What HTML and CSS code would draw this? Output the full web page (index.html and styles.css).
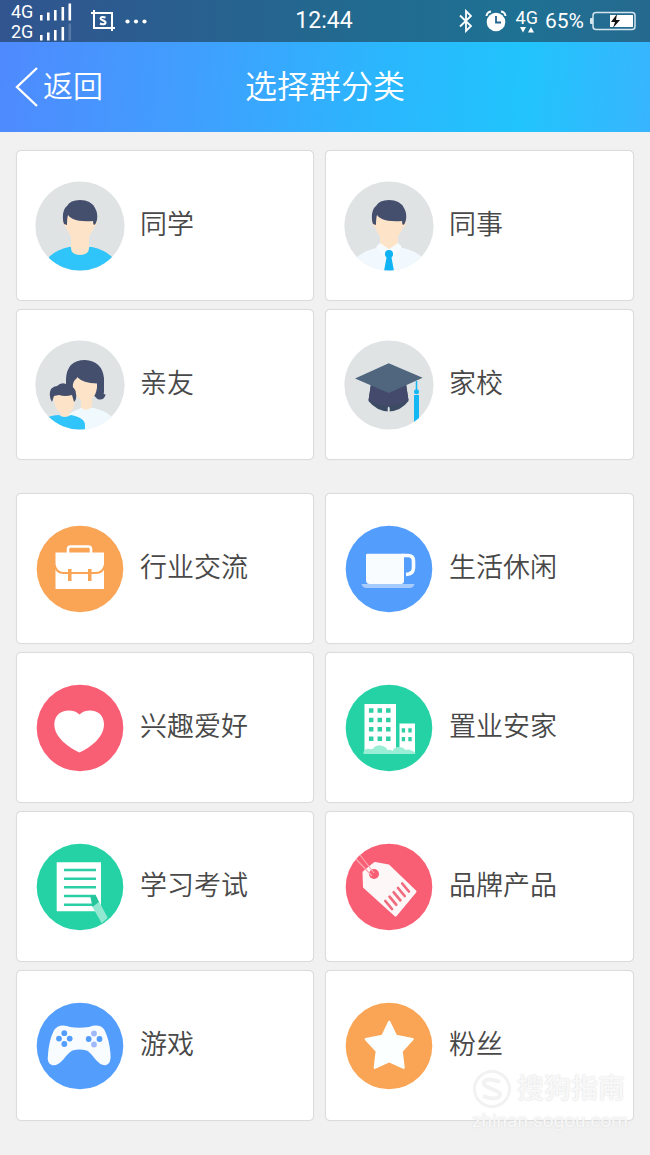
FILE: index.html
```html
<!DOCTYPE html>
<html lang="zh-CN">
<head>
<meta charset="utf-8">
<meta name="viewport" content="width=device-width, initial-scale=1">
<title>选择群分类</title>
<link rel="stylesheet" href="styles.css">
</head>
<body>
<svg class="defs" width="0" height="0" aria-hidden="true">
  <defs>
    <clipPath id="disc"><circle cx="45" cy="45" r="44.6"/></clipPath>
    <g id="head">
      <path d="M36 54h18v13q0 7-9 7t-9-7z" fill="#fde3c8"/>
      <path d="M30 38q-3 0-2 4 .6 3.500 3 4 3 9 9 13 5 3 10 0 6-4 9-13 2.500-.5 3-4 0-4-2-4l-2-6H32z" fill="#fde3c8"/>
      <path d="M29 43q-1.500-3-1-10 1-6 4-8 3-6 13-6 11 0 15 8 3 5 2 12l-1.500 4-1.500 1q-1-1-1-4-13 1-20-2-4-2-5-4-1 3-1 10z" fill="#444f6e"/>
    </g>
  </defs>
</svg>

<div class="status">
  <div class="status-side">
    <div class="networks">
      <div class="network"><span>4G</span>
        <svg width="33" height="18" viewBox="0 0 33 18" fill="#fff"><path d="M1 12h2.600v5.500H1zM8 9.500h2.600v8H8zM15 7h2.600v10.500H15zM22.500 4h2.600v13.500h-2.600zM29.500.5h2.600v17h-2.600z"/></svg>
      </div>
      <div class="network"><span>2G</span>
        <svg width="33" height="18" viewBox="0 0 33 18" fill="#fff"><path d="M1 12h2.600v5.500H1zM8 9.500h2.600v8H8zM15 7h2.600v10.500H15zM22.500 4h2.600v13.500h-2.600z"/><path d="M29.500.5h2.600v17h-2.600z" opacity=".2"/></svg>
      </div>
    </div>
    <svg class="crop" width="24" height="22" viewBox="0 0 24 22" fill="none" stroke="#fff" stroke-width="2"><path d="M0 3h21v18M3 0v18h21M14.500 7.500Q10 6 9.500 8.500c0 2 5 1.500 5 4 0 2.300-3.500 2-5.500 1"/></svg>
    <svg width="22" height="5" viewBox="0 0 22 5" fill="#fff"><circle cx="2.500" cy="2.500" r="2.100"/><circle cx="11" cy="2.500" r="2.100"/><circle cx="19.500" cy="2.500" r="2.100"/></svg>
  </div>
  <time class="clock">12:44</time>
  <div class="status-side status-end">
    <svg width="14" height="24" viewBox="0 0 14 24" fill="none" stroke="#fff" stroke-width="1.800"><path d="M1 6.500l11 10.500-5 5V2l5 5L1 17.500"/></svg>
    <svg class="alarm" width="22" height="22" viewBox="0 0 22 22"><circle cx="11" cy="12" r="9.300" fill="#fff"/><path d="M1.500 6Q2 2 6 1.500M20.500 6Q20 2 16 1.500" fill="none" stroke="#fff" stroke-width="2"/><path d="M11 6v6.500h5" fill="none" stroke="#23638f" stroke-width="1.800"/></svg>
    <div class="data"><span>4G</span>
      <svg width="16" height="6" viewBox="0 0 16 6" fill="#fff"><path d="M1 0h6L4 5.500zM9 5.500h6L12 0z"/></svg>
    </div>
    <span class="percent">65%</span>
    <svg width="48" height="20" viewBox="0 0 48 20"><path d="M4 7H2q-1 0-1 1v4q0 1 1 1h2" fill="#d5e5ee"/><rect x="4" y="1.500" width="42" height="17" rx="3" fill="none" stroke="#d5e5ee" stroke-width="1.500"/><path d="M21 4h23v12H21z" fill="#fff"/><path d="M28 3l-6 8h4l-2 6 7-8h-4z" fill="#111"/></svg>
  </div>
</div>

<header class="bar">
  <a class="back" href="#back"><svg width="24" height="40" viewBox="0 0 24 40" fill="none" stroke="#fff" stroke-width="2.400"><path d="M22 1L2 20l20 19"/></svg><span>返回</span></a>
  <h1 class="title">选择群分类</h1>
</header>

<main class="content">
  <nav class="group" aria-label="关系">
    <a class="card" href="#classmate"><svg class="icon" viewBox="0 0 90 90"><g clip-path="url(#disc)"><path d="M0 0h90v90H0z" fill="#dfe3e4"/><path d="M14 76q7-7 20-10h23q13 3 20 10v14H14z" fill="#2fc5fb"/><use href="#head"/></g></svg><span class="label">同学</span></a>
    <a class="card" href="#colleague"><svg class="icon" viewBox="0 0 90 90"><g clip-path="url(#disc)"><path d="M0 0h90v90H0z" fill="#dfe3e4"/><path d="M12 77q7-7 20-10h27q13 3 20 10v14H12z" fill="#f1f9fe"/><use href="#head"/><path d="M36 62l9 6 9-6 4 4-7 9-6-6-6 6-7-9z" fill="#f5fbfe"/><circle cx="45" cy="73" r="4" fill="#0fb2f2"/><path d="M43 74h4l3 16H40z" fill="#0fb2f2"/></g></svg><span class="label">同事</span></a>
    <a class="card" href="#family"><svg class="icon" viewBox="0 0 90 90"><g clip-path="url(#disc)"><path d="M0 0h90v90H0z" fill="#dfe3e4"/><path d="M31 50V39q1-19 19-19 17 1 19 18v14q-1 3 1 2l.5 1q-2 6-8 4l-3-3-18 0-4 4-5-4z" fill="#444f6e"/><path d="M34 74q6-4 12-6h13q12 3 18 9l-5 13H44z" fill="#f0f9fe"/><path d="M42 37q6 6 20 6.500v4q-1 8-5 11v8q-5 6-11 1v-7q-7-5-8-13-1-6 4-9.500z" fill="#fde3c8"/><path d="M17 55q0 4 2 6 2 10 7 12v3q3 3 8 0v-3q5-3 6-12v-6q-11 0-16-2z" fill="#fde3c8"/><path d="M17 62q-4-7-1-13 3-3 6-3 5-5 11-1 8 2 8 9 1 5-2 8l-2-7q-7 2-13 0l-5 1z" fill="#444f6e"/><path d="M13 77q6-2 11-2 5 4 12 0 14 3 14 10v6H26z" fill="#2fc5fb"/></g></svg><span class="label">亲友</span></a>
    <a class="card" href="#school"><svg class="icon" viewBox="0 0 90 90"><g clip-path="url(#disc)"><path d="M0 0h90v90H0z" fill="#dfe3e4"/><path d="M27 44l-2.500 17q8 10 20.200 10.500Q57 71 64.500 61L62 44z" fill="#3b4b63"/><path d="M27 44l-2.500 16q8 5 20.200 6Q57 65 64.500 60L62 44z" fill="#444a6c"/><path d="M43.700 72v-4q1-3 2 0v4z" fill="#dfe3e4"/><path d="M11 38.500l33.700-15.200 34 14.400L44.700 53z" fill="#50667e"/><path d="M72.500 41v12" stroke="#12b7f3" stroke-width="1.500"/><circle cx="72.500" cy="51.700" r="2.500" fill="#12b7f3"/><path d="M70 55h5v34h-5z" fill="#12b7f3"/></g></svg><span class="label">家校</span></a>
  </nav>

  <nav class="group" aria-label="主题">
    <a class="card" href="#industry"><svg class="icon" viewBox="0 0 90 90"><circle cx="45" cy="45" r="43.300" fill="#faa455"/><path d="M33 29v-4q0-2.500 2.500-2.500h18Q56 22.500 56 25v4" fill="none" stroke="#fff" stroke-width="2.600"/><path d="M20.500 28.500H69V65H20.500z" fill="#fff"/><path d="M19.500 41q2 8 9 8h32.500q7 0 9-8" fill="none" stroke="#faa455" stroke-width="2.200"/><path d="M33 45h3.500v12H33zM53 45h3.500v12H53z" fill="#faa455"/></svg><span class="label">行业交流</span></a>
    <a class="card" href="#leisure"><svg class="icon" viewBox="0 0 90 90"><circle cx="45" cy="45" r="43.300" fill="#539dfd"/><path d="M23.500 29.700H60V57q0 3-3 3H25.500q-3.500 0-3.500-4V31q0-1.300 1.500-1.300z" fill="#f9fcff"/><path d="M58 31.500h6q5.500 0 5.500 5.500v7q0 6-7.500 6.500" fill="none" stroke="#f9fcff" stroke-width="3.600"/><path d="M17.500 60h53q-1 4-5 4h-43q-4 0-5-4z" fill="#a6ccfe"/></svg><span class="label">生活休闲</span></a>
    <a class="card" href="#hobby"><svg class="icon" viewBox="0 0 90 90"><circle cx="45" cy="45" r="43.300" fill="#f95f74"/><path d="M44.500 31.600C39 25 20 25 19.300 41c0 14 15 23.500 25.200 28.600C55 64.500 69 55 69 41 68.500 25 50 25 44.500 31.600z" fill="#fff"/></svg><span class="label">兴趣爱好</span></a>
    <a class="card" href="#home"><svg class="icon" viewBox="0 0 90 90"><circle cx="45" cy="45" r="43.300" fill="#25d2a6"/><path d="M20.500 21H52v50H20.500zM55.500 40.600H71V71H55.500z" fill="#fff"/><path d="M27.200 25.300v34M35.800 25.300v34M44.300 25.300v34" stroke="#2fcfa6" stroke-width="4.500" stroke-dasharray="4.500 4.870"/><path d="M59.400 45.300v14M66 45.300v14" stroke="#2fcfa6" stroke-width="3.400" stroke-dasharray="4.200 4.600"/><path d="M19.500 71v-2q2-4 6-3 3 1 4-1 3-4 9-2 4 1 5 4 3-1 5 1 2-4 6-4 5 0 7 3 3-1 5 0l4 2 1 2z" fill="#9beed6"/></svg><span class="label">置业安家</span></a>
    <a class="card" href="#study"><svg class="icon" viewBox="0 0 90 90"><circle cx="45" cy="45" r="43.300" fill="#25d2a6"/><path d="M21.700 20.300H66v49H21.700z" fill="#fff"/><path d="M29 28h32M29 36.700h32M29 45.300h32M29 54h32M29 62.700h30" stroke="#2bcfa5" stroke-width="2.600"/><path d="M57.500 65l6.500-5.500 8.700 16.300-6 5.500z" fill="#92e8d0"/><path d="M55 53l6.500 1.500L64 60l-6.500 5z" fill="#25c59c"/></svg><span class="label">学习考试</span></a>
    <a class="card" href="#brand"><svg class="icon" viewBox="0 0 90 90"><circle cx="45" cy="45" r="43.300" fill="#f95f74"/><path d="M20 30.500l11-9 13.500 2.500L71 49.500 51.500 73 20.500 45z" fill="#fef7f8" stroke="#fef7f8" stroke-width="3" stroke-linejoin="round"/><circle cx="30" cy="32" r="5" fill="#f95f74"/><path d="M12 17l16 17M16 13l14 18" stroke="#fca7b2" stroke-width="1.200"/><path d="M41.300 59l6.700 8M45.500 54.700l6.700 8M49.700 50.300l6.700 8M54 46l6.700 8M58.200 41.500l6.700 8" stroke="#ef6b7d" stroke-width="2.700" stroke-linecap="round"/></svg><span class="label">品牌产品</span></a>
    <a class="card" href="#games"><svg class="icon" viewBox="0 0 90 90"><circle cx="45" cy="45" r="43.300" fill="#539dfd"/><path d="M28 24.500q4 0 7 1.500 9 1.500 19 0 11-4 15.500 3 5 10 6 24 1 10-5 11.200-5 .5-11-7-5-6.700-8-7.700-7-2-14 0-3 1-9 8.700-6 7-11 6-6-1.200-4.500-11 1-14 6-24 3-4.700 9-4.700z" fill="#f8fcff"/><g fill="#539dfd"><circle cx="29.300" cy="32.200" r="2.900"/><circle cx="29.300" cy="43" r="2.900"/><circle cx="24" cy="37.600" r="2.900"/><circle cx="34.700" cy="37.600" r="2.900"/><circle cx="53.700" cy="38" r="2.900"/><circle cx="64.500" cy="38" r="2.900"/></g><g fill="#9fb9fa"><circle cx="59" cy="32.500" r="2.900"/><circle cx="59" cy="43.500" r="2.900"/></g></svg><span class="label">游戏</span></a>
    <a class="card" href="#fans"><svg class="icon" viewBox="0 0 90 90"><circle cx="45" cy="45" r="43.300" fill="#faa455"/><path d="M45.200 21l6.800 14 16.500 3.200-11 12 2 16.500-14.300-6.500-14.300 6.500 2-16.500-11-12L38.500 35z" fill="#fbffff" stroke="#fbffff" stroke-width="2.500" stroke-linejoin="round"/></svg><span class="label">粉丝</span></a>
  </nav>
</main>

<aside class="watermark">
  <div class="brand"><svg width="40" height="40" viewBox="0 0 40 40" fill="none" stroke="#f2f2f2"><circle cx="20" cy="20" r="17.500" stroke-width="3"/><path d="M28 13q-13-5-16 0c-2 6 15 7 16 12 0 6-10 5-17 2" stroke-width="4"/></svg><span>搜狗指南</span></div>
  <div class="site">zhinan.sogou.com</div>
</aside>
</body>
</html>
```

FILE: styles.css
```css
* {
  box-sizing: border-box;
}

body {
  position: relative;
  margin: 0;
  min-height: 100vh;
  background: #f1f1f1;
  color: #484848;
  font-family: Roboto, "Noto Sans CJK SC", sans-serif;
  font-weight: 350;
}

svg {
  display: block;
  flex: none;
}

.defs {
  position: absolute;
}

.status {
  display: grid;
  grid-template-columns: 1fr auto 1fr;
  align-items: center;
  height: 42px;
  padding: 0 13px 0 11px;
  background: linear-gradient(90deg, #31548f, #23688f 50%, #1e7193 80%, #26698f);
  color: #fff;
  font-weight: 400;
}

.status-side {
  display: flex;
  align-items: center;
}

.crop {
  margin: 0 10px 0 19px;
}

.status-end {
  justify-content: flex-end;
}

.network {
  display: flex;
  align-items: center;
  gap: 6px;
  height: 20px;
  font-size: 18px;
  line-height: 20px;
}

.networks {
  padding-top: 2px;
}

.clock {
  font-size: 23px;
  line-height: 28px;
}

.alarm {
  margin: 0 9px 0 12px;
}

.data {
  display: flex;
  flex-direction: column;
  align-items: center;
  font-size: 18px;
  line-height: 18px;
}

.percent {
  margin: 0 5px 0 7px;
  font-size: 21px;
  line-height: 24px;
}

.bar {
  display: grid;
  grid-template-columns: 1fr auto 1fr;
  align-items: center;
  height: 90px;
  padding: 0 15px;
  background: linear-gradient(95deg, #4f8afe, #409ffe 30%, #2bb6fd 58%, #21c4fd 80%, #38b5fe);
  color: #fff;
}

.back {
  display: flex;
  align-items: center;
  gap: 4px;
  color: inherit;
  font-size: 30px;
  line-height: 40px;
  text-decoration: none;
}

.title {
  margin: 0;
  font-size: 32px;
  font-weight: 350;
  line-height: 40px;
}

.content {
  display: flex;
  flex-direction: column;
  gap: 33px;
  padding: 18px 16px 34px;
}

.group {
  display: grid;
  grid-template-columns: 298fr 309fr;
  gap: 8px 11px;
}

.card {
  display: flex;
  align-items: center;
  gap: 15px;
  height: 151px;
  padding: 0 18px;
  border: 1px solid #dcdcdd;
  border-radius: 5px;
  background: #fff;
  box-shadow: 0 0 1px #dcdcdd;
  color: inherit;
  text-decoration: none;
}

.icon {
  width: 90px;
  height: 90px;
}

.label {
  padding-bottom: 2px;
  font-size: 27px;
  line-height: 36px;
}

.watermark {
  position: absolute;
  right: 22px;
  bottom: 22px;
  color: #f8f8f8;
  font-weight: 400;
  text-shadow: 0 0 2px #d8d8d8;
}

.brand {
  display: flex;
  align-items: center;
  gap: 5px;
  font-size: 27px;
  font-weight: 500;
  line-height: 40px;
}

.site {
  font-size: 19px;
  line-height: 24px;
  text-align: center;
}
```
